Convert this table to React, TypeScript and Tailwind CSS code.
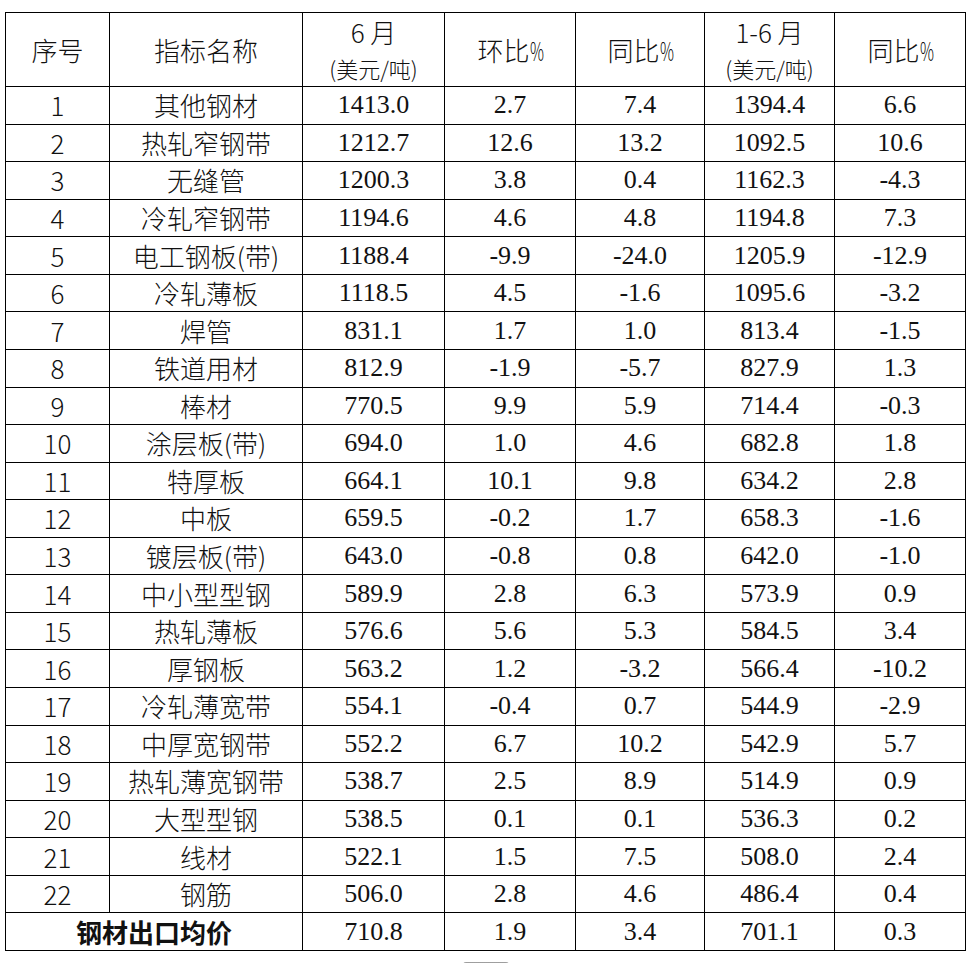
import React from "react";

const rows: [string, string, string, string, string, string, string][] = [
  ["1", "其他钢材", "1413.0", "2.7", "7.4", "1394.4", "6.6"],
  ["2", "热轧窄钢带", "1212.7", "12.6", "13.2", "1092.5", "10.6"],
  ["3", "无缝管", "1200.3", "3.8", "0.4", "1162.3", "-4.3"],
  ["4", "冷轧窄钢带", "1194.6", "4.6", "4.8", "1194.8", "7.3"],
  ["5", "电工钢板(带)", "1188.4", "-9.9", "-24.0", "1205.9", "-12.9"],
  ["6", "冷轧薄板", "1118.5", "4.5", "-1.6", "1095.6", "-3.2"],
  ["7", "焊管", "831.1", "1.7", "1.0", "813.4", "-1.5"],
  ["8", "铁道用材", "812.9", "-1.9", "-5.7", "827.9", "1.3"],
  ["9", "棒材", "770.5", "9.9", "5.9", "714.4", "-0.3"],
  ["10", "涂层板(带)", "694.0", "1.0", "4.6", "682.8", "1.8"],
  ["11", "特厚板", "664.1", "10.1", "9.8", "634.2", "2.8"],
  ["12", "中板", "659.5", "-0.2", "1.7", "658.3", "-1.6"],
  ["13", "镀层板(带)", "643.0", "-0.8", "0.8", "642.0", "-1.0"],
  ["14", "中小型型钢", "589.9", "2.8", "6.3", "573.9", "0.9"],
  ["15", "热轧薄板", "576.6", "5.6", "5.3", "584.5", "3.4"],
  ["16", "厚钢板", "563.2", "1.2", "-3.2", "566.4", "-10.2"],
  ["17", "冷轧薄宽带", "554.1", "-0.4", "0.7", "544.9", "-2.9"],
  ["18", "中厚宽钢带", "552.2", "6.7", "10.2", "542.9", "5.7"],
  ["19", "热轧薄宽钢带", "538.7", "2.5", "8.9", "514.9", "0.9"],
  ["20", "大型型钢", "538.5", "0.1", "0.1", "536.3", "0.2"],
  ["21", "线材", "522.1", "1.5", "7.5", "508.0", "2.4"],
  ["22", "钢筋", "506.0", "2.8", "4.6", "486.4", "0.4"],
];

const cjk = "font-['Noto_Sans_CJK_SC',sans-serif]";
const serif = "font-['Liberation_Serif','Noto_Sans_CJK_SC',serif]";
const cell = "border border-black p-0 text-center align-middle leading-none text-[#111]";

function Pct() {
  return <span className="inline-block w-[13px] text-left scale-x-[0.6] origin-left">%</span>;
}

export default function App() {
  return (
    <div className="bg-white w-[971px] h-[963px] overflow-hidden pt-[12px] pl-[5px]">
      <table className="border-collapse table-fixed w-[960px]">
        <colgroup>
          <col className="w-[104px]" />
          <col className="w-[193px]" />
          <col className="w-[142px]" />
          <col className="w-[131px]" />
          <col className="w-[129px]" />
          <col className="w-[130px]" />
          <col className="w-[131px]" />
        </colgroup>
        <thead>
          <tr className="h-[74px]">
            <th className={`${cell} ${cjk} font-light text-[26px]`}>序号</th>
            <th className={`${cell} ${cjk} font-light text-[26px]`}>指标名称</th>
            <th className={`${cell} ${cjk} font-light`}>
              <div className="text-[26px] leading-[36px]">6 月</div>
              <div className="text-[22px] leading-[36px]">(美元/吨)</div>
            </th>
            <th className={`${cell} ${cjk} font-light text-[26px]`}>环比<Pct /></th>
            <th className={`${cell} ${cjk} font-light text-[26px]`}>同比<Pct /></th>
            <th className={`${cell} ${cjk} font-light`}>
              <div className="text-[26px] leading-[36px]">1-6 月</div>
              <div className="text-[22px] leading-[36px]">(美元/吨)</div>
            </th>
            <th className={`${cell} ${cjk} font-light text-[26px]`}>同比<Pct /></th>
          </tr>
        </thead>
        <tbody>
          {rows.map((r) => (
            <tr key={r[0]} className="h-[37.57px]">
              <td className={`${cell} ${cjk} font-light text-[26px]`}>{r[0]}</td>
              <td className={`${cell} ${cjk} font-light text-[26px]`}>{r[1]}</td>
              <td className={`${cell} ${serif} text-[26px]`}>{r[2]}</td>
              <td className={`${cell} ${serif} text-[26px]`}>{r[3]}</td>
              <td className={`${cell} ${serif} text-[26px]`}>{r[4]}</td>
              <td className={`${cell} ${serif} text-[26px]`}>{r[5]}</td>
              <td className={`${cell} ${serif} text-[26px]`}>{r[6]}</td>
            </tr>
          ))}
          <tr className="h-[37.57px]">
            <td colSpan={2} className={`${cell} ${cjk} font-bold text-[26px]`}>钢材出口均价</td>
            <td className={`${cell} ${serif} text-[26px]`}>710.8</td>
            <td className={`${cell} ${serif} text-[26px]`}>1.9</td>
            <td className={`${cell} ${serif} text-[26px]`}>3.4</td>
            <td className={`${cell} ${serif} text-[26px]`}>701.1</td>
            <td className={`${cell} ${serif} text-[26px]`}>0.3</td>
          </tr>
        </tbody>
      </table>
      <div className="mx-auto mt-[11px] -translate-x-[2px] w-[46px] h-[6px] rounded-full bg-gradient-to-b from-[#9a9a9a] to-[#d0d0d0]" />
    </div>
  );
}
